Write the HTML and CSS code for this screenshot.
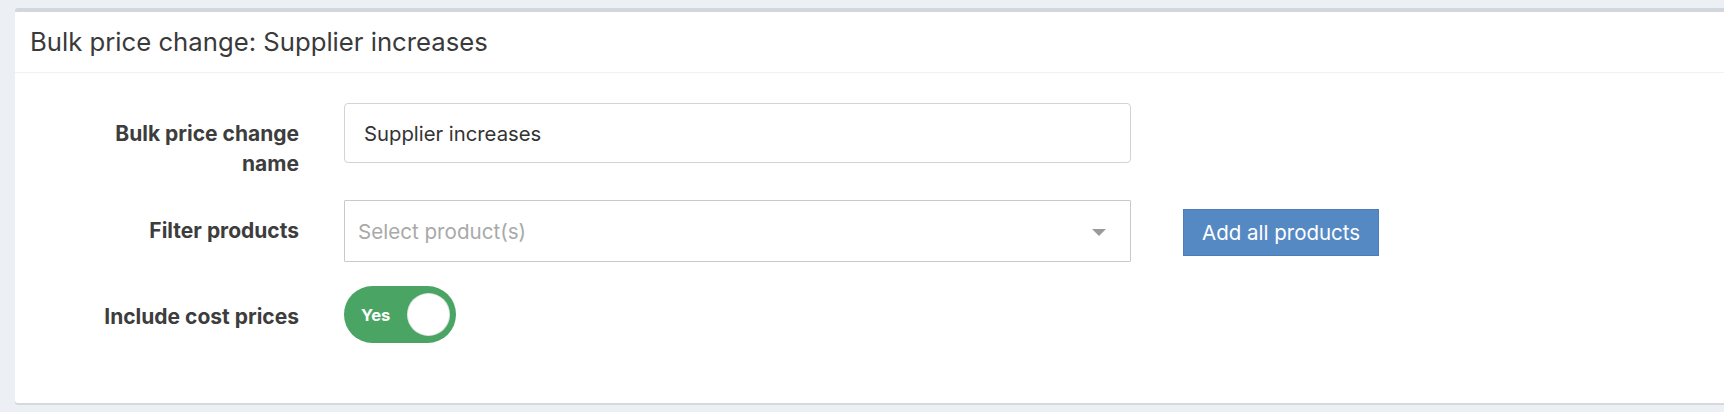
FILE: index.html
```html
<!DOCTYPE html>
<html>
<head>
<meta charset="utf-8">
<link rel="stylesheet" href="styles.css">
</head>
<body>
<div class="page">
  <div class="box">
    <div class="box-header">
      <h3 class="box-title">Bulk price change: Supplier increases</h3>
    </div>
    <div class="box-body">
      <div class="row">
        <label class="label">Bulk price change name</label>
        <div class="control">
          <div class="input">Supplier increases</div>
        </div>
      </div>
      <div class="row">
        <label class="label">Filter products</label>
        <div class="control">
          <div class="select">
            <span class="placeholder">Select product(s)</span>
            <span class="caret"></span>
          </div>
        </div>
        <button class="btn">Add all products</button>
      </div>
      <div class="row">
        <label class="label label-toggle">Include cost prices</label>
        <div class="toggle">
          <span class="toggle-text">Yes</span>
          <span class="knob"></span>
        </div>
      </div>
    </div>
  </div>
</div>
</body>
</html>
```

FILE: styles.css
```css
html, body {
  margin: 0;
  padding: 0;
  background: #ecf0f5;
  overflow: hidden;
  width: 1724px;
  height: 412px;
  font-family: Inter, "Noto Sans", sans-serif;
  color: #333;
}

.page {
  padding: 8px 0 0 15px;
}

.box {
  width: 1760px;
  background: #fff;
  border-top: 4px solid #d2d6de;
  border-radius: 3px;
  box-shadow: 0 2px 0 #d5d9df;
}

.box-header {
  height: 60px;
  border-bottom: 1px solid #f1f1f1;
  display: flex;
  align-items: center;
  padding-left: 15px;
}

.box-title {
  margin: 0;
  font-size: 25.7px;
  font-weight: 400;
  color: #3a3a3a;
  line-height: 1;
}

.box-body {
  padding: 30px 0 60px 0;
}

.row {
  display: flex;
  align-items: flex-start;
  margin-bottom: 21px;
}

.row:nth-child(2) {
  margin-bottom: 24px;
}

.row:last-child {
  margin-bottom: 0;
}

.label {
  width: 284px;
  flex: none;
  text-align: right;
  font-weight: 700;
  font-size: 21px;
  line-height: 30px;
  padding: 16px 0 0 64px;
  box-sizing: border-box;
  color: #3d3d3d;
}

.label-toggle {
  padding-top: 16px;
}

.control {
  margin-left: 45px;
  width: 787px;
  flex: none;
}

.input {
  height: 60px;
  box-sizing: border-box;
  border: 1px solid #d2d2d8;
  border-radius: 4px;
  padding: 0 19px;
  display: flex;
  align-items: center;
  font-size: 20.3px;
  color: #333;
}

.select {
  height: 62px;
  box-sizing: border-box;
  border: 1px solid #c9c9c9;
  border-radius: 1px;
  padding: 0 13px;
  display: flex;
  align-items: center;
  justify-content: space-between;
}

.placeholder {
  font-size: 20.6px;
  color: #a9a9a9;
}

.caret {
  width: 0;
  height: 0;
  border-left: 7px solid transparent;
  border-right: 7px solid transparent;
  border-top: 7px solid #9a9a9a;
  margin-right: 11px;
  margin-top: 2px;
}

.btn {
  margin-left: 52px;
  margin-top: 9px;
  height: 47px;
  padding: 0 18px;
  background: #5589c4;
  border: 1px solid #4a7db9;
  border-radius: 0;
  color: #fff;
  font-family: Inter, "Noto Sans", sans-serif;
  font-size: 20.5px;
  font-weight: 400;
}

.toggle {
  margin-left: 45px;
  width: 112px;
  height: 57px;
  border-radius: 29px;
  background: #4aa564;
  display: flex;
  align-items: center;
  justify-content: space-between;
  padding: 0 7px 0 17px;
  box-sizing: border-box;
}

.toggle-text {
  color: #fff;
  font-weight: 700;
  font-size: 16.5px;
}

.knob {
  width: 41px;
  height: 41px;
  border-radius: 50%;
  background: #fff;
  box-shadow: 0 0 0 1px #e6e6e6;
}
```
